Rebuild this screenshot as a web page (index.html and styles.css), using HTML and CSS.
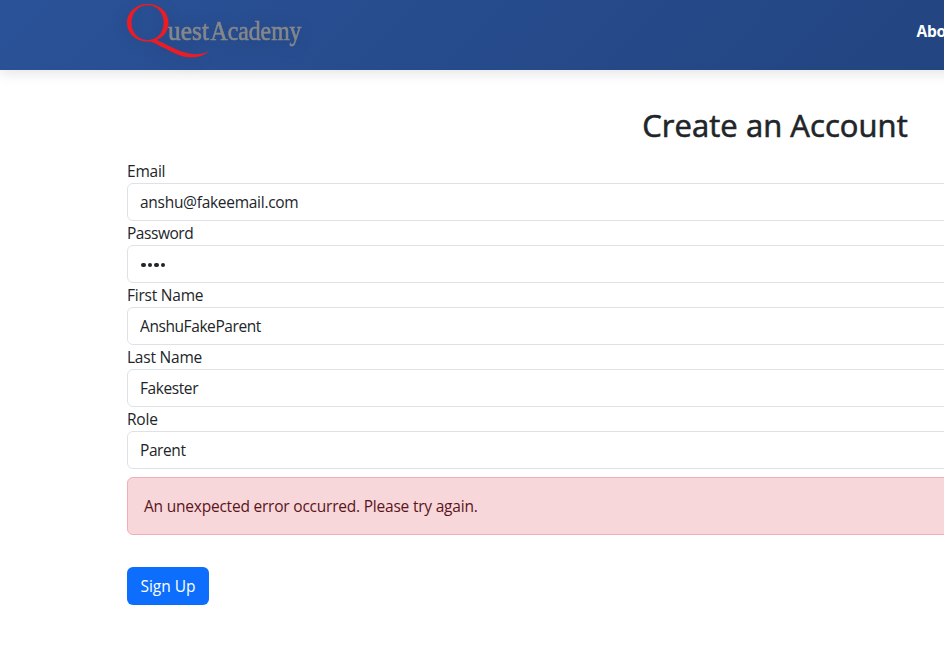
FILE: index.html
```html
<!DOCTYPE html>
<html lang="en">
<head>
<meta charset="utf-8">
<title>Create an Account</title>
<link rel="stylesheet" href="styles.css">
</head>
<body>
<div class="page">
  <header class="navbar">
    <div class="container navbar-inner">
      <svg class="logo" width="180" height="60" viewBox="0 0 180 60" role="img" aria-label="Quest Academy">
        <path class="logo-q" fill-rule="evenodd" d="M20.7 4C32.5 4 41.5 12 41.5 22.8S32.5 41.6 20.7 41.6 0 33.4 0 22.8 8.9 4 20.7 4ZM20.7 5.300C11.6 5.300 4.500 12.6 4.500 22.8S11.6 40 20.7 40 36.700 33 36.700 22.8 29.800 5.300 20.7 5.300Z"/>
        <path class="logo-q" d="M20 40.300L28 39.600C35 42 44 47.600 53 51C63 54.600 73 55.700 81.700 51.200C75 57.900 64 58.600 54 55.700C43 52.400 32 44 20 40.300Z"/>
        <g class="logo-text">
          <text x="41" y="40" textLength="41" lengthAdjust="spacingAndGlyphs">uest</text>
          <text x="83.500" y="40" textLength="91" lengthAdjust="spacingAndGlyphs">Academy</text>
        </g>
      </svg>
      <a class="nav-link">About</a>
    </div>
  </header>
  <main class="container">
    <h1>Create an Account</h1>
    <form>
      <label for="email">Email</label>
      <input class="control email" id="email" type="text" value="anshu@fakeemail.com">
      <label class="l-password" for="password">Password</label>
      <div class="control password" id="password"><i></i><i></i><i></i><i></i></div>
      <label for="first">First Name</label>
      <input class="control name" id="first" type="text" value="AnshuFakeParent">
      <label for="last">Last Name</label>
      <input class="control name" id="last" type="text" value="Fakester">
      <label for="role">Role</label>
      <input class="control name" id="role" type="text" value="Parent">
      <div class="alert">An unexpected error occurred. Please try again.</div>
      <button class="btn" type="button">Sign Up</button>
    </form>
  </main>
</div>
</body>
</html>
```
FILE: styles.css
```css
* { box-sizing: border-box; }
html { overflow: hidden; }
body {
  margin: 0;
  overflow: hidden;
  background: #fff;
  color: #212529;
  font: 400 15.5px/24px "Open Sans", "Noto Sans", sans-serif;
}
.page { width: 1550px; min-height: 664px; }
.container { width: 1320px; margin: 0 auto; padding: 0 12px; }
.navbar {
  height: 70px;
  background: linear-gradient(135deg, #2a5298, #1e3c72);
  box-shadow: 0 4px 12px rgba(0, 0, 0, .1);
}
.navbar-inner { display: flex; align-items: flex-start; }
.logo { display: block; overflow: visible; filter: drop-shadow(0 2px 8px rgba(0, 0, 0, .12)); }
.logo-q { fill: #ed1c24; }
.logo-text { fill: #85878b; font: 26.500px "Liberation Serif", serif; stroke: #85878b; stroke-width: .6px; }
.nav-link { margin: 19px 0 0 609.500px; color: #fff; font-weight: 700; letter-spacing: -.3px; }
h1 {
  margin: 0;
  padding-top: 36px;
  font-size: 31px;
  font-weight: 500;
  line-height: 38px;
  letter-spacing: .05px;
  text-align: center;
  -webkit-text-stroke: .6px #212529;
}
form { padding-top: 15px; }
label { display: block; height: 24px; letter-spacing: -.22px; }
.l-password { letter-spacing: -.45px; }
.control {
  display: block;
  width: 100%;
  height: 38px;
  padding: 6px 12px;
  border: 1px solid #dee2e6;
  border-radius: 6px;
  background: #fff;
  color: #212529;
  font: inherit;
  outline: 0;
}
.email { letter-spacing: -.28px; }
.name { letter-spacing: -.42px; }
.password { display: flex; align-items: center; gap: 2px; padding: 2px 13px 0; }
.password i { width: 4.600px; height: 4.600px; border-radius: 50%; background: #212529; }
.alert {
  height: 58px;
  margin-top: 8px;
  padding: 16px;
  border: 1px solid #f1aeb5;
  border-radius: 6px;
  background: #f8d7da;
  color: #58151c;
  letter-spacing: -.215px;
}
.btn {
  width: 82px;
  height: 38px;
  margin-top: 32px;
  padding: 0;
  border: 0;
  border-radius: 6px;
  background: #0d6efd;
  color: #fff;
  font: inherit;
}
```
